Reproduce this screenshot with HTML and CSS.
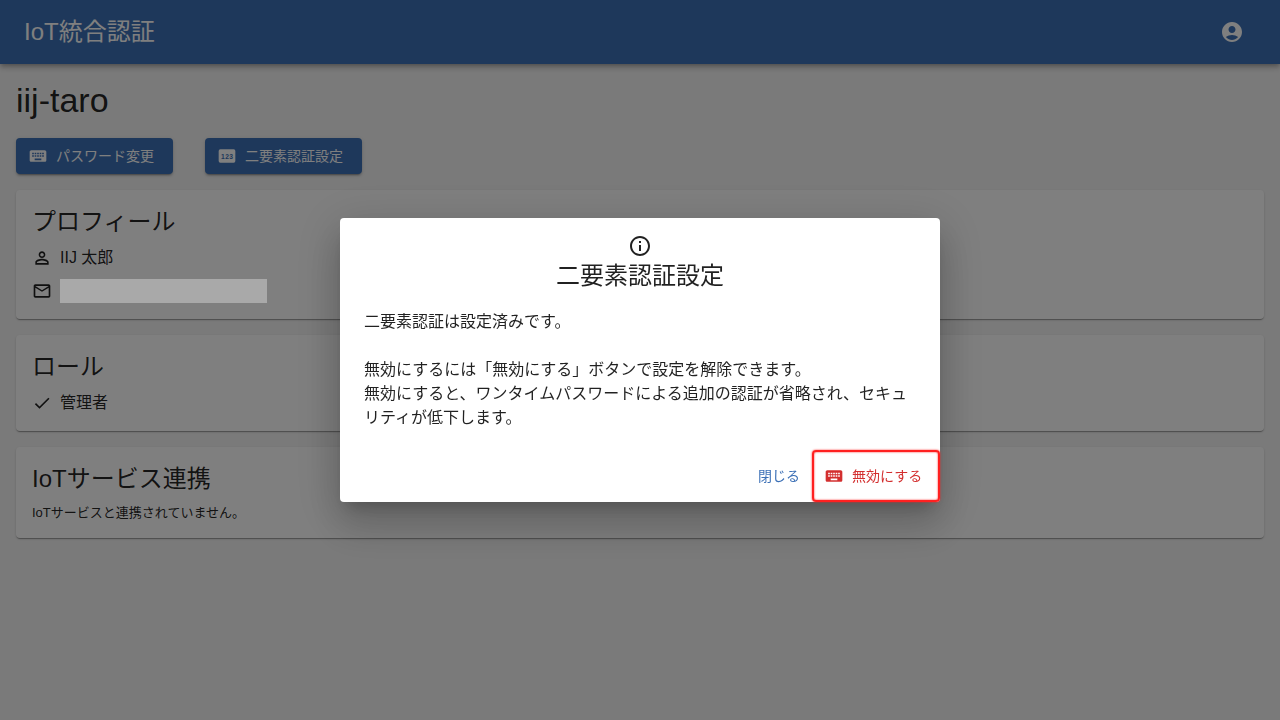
FILE: index.html
```html
<!DOCTYPE html>
<html lang="ja">
<head>
    <meta charset="UTF-8">
    <meta name="viewport" content="width=device-width, initial-scale=1.0">
    <title>IoT統合認証</title>
    <link rel="stylesheet" href="styles.css">
</head>
<body>

    <!-- Header -->
    <header class="app-bar">
        <div class="app-title">IoT統合認証</div>
        <button type="button" class="icon-button" aria-label="アカウント">
            <svg class="icon-large" viewBox="0 0 24 24" aria-hidden="true"><path d="M12 2C6.48 2 2 6.48 2 12s4.48 10 10 10 10-4.48 10-10S17.52 2 12 2zm0 4c1.93 0 3.5 1.57 3.5 3.5S13.93 13 12 13s-3.5-1.57-3.5-3.5S10.07 6 12 6zm0 14c-2.03 0-4.43-.82-6.14-2.88C7.55 15.8 9.68 15 12 15s4.45.8 6.14 2.12C16.43 19.18 14.03 20 12 20z"/></svg>
        </button>
    </header>

    <main class="content">
        <h1>iij-taro</h1>

        <div class="toolbar">
            <button type="button" class="button button-contained">
                <svg class="icon" viewBox="0 0 24 24" aria-hidden="true"><path d="M20 5H4c-1.1 0-1.99.9-1.99 2L2 17c0 1.1.9 2 2 2h16c1.1 0 2-.9 2-2V7c0-1.1-.9-2-2-2zm-9 3h2v2h-2V8zm0 3h2v2h-2v-2zM8 8h2v2H8V8zm0 3h2v2H8v-2zm-1 2H5v-2h2v2zm0-3H5V8h2v2zm9 7H8v-2h8v2zm0-4h-2v-2h2v2zm0-3h-2V8h2v2zm3 3h-2v-2h2v2zm0-3h-2V8h2v2z"/></svg>
                パスワード変更
            </button>
            <button type="button" class="button button-contained">
                <svg class="icon" viewBox="0 0 24 24" aria-hidden="true">
                    <rect x="2" y="4" width="20" height="16" rx="2"/>
                    <text class="pin-digits" x="7" y="15">1</text>
                    <text class="pin-digits" x="12" y="15">2</text>
                    <text class="pin-digits" x="17" y="15">3</text>
                </svg>
                二要素認証設定
            </button>
        </div>

        <!-- Profile -->
        <section class="card">
            <h2>プロフィール</h2>
            <ul class="card-list">
                <li>
                    <svg class="icon" viewBox="0 0 24 24" aria-hidden="true"><path d="M12 5.9c1.16 0 2.1.94 2.1 2.1s-.94 2.1-2.1 2.1S9.9 9.16 9.9 8s.94-2.1 2.1-2.1m0 9c2.97 0 6.1 1.46 6.1 2.1v1.1H5.9V17c0-.64 3.13-2.1 6.1-2.1M12 4C9.79 4 8 5.79 8 8s1.79 4 4 4 4-1.79 4-4-1.79-4-4-4zm0 9c-2.67 0-8 1.34-8 4v3h16v-3c0-2.66-5.33-4-8-4z"/></svg>
                    <span>IIJ 太郎</span>
                </li>
                <li>
                    <svg class="icon" viewBox="0 0 24 24" aria-hidden="true"><path d="M20 4H4c-1.1 0-1.99.9-1.99 2L2 18c0 1.1.9 2 2 2h16c1.1 0 2-.9 2-2V6c0-1.1-.9-2-2-2zm0 14H4V8l8 5 8-5v10zm-8-7L4 6h16l-8 5z"/></svg>
                    <span class="masked"></span>
                </li>
            </ul>
        </section>

        <!-- Roles -->
        <section class="card">
            <h2>ロール</h2>
            <ul class="card-list">
                <li>
                    <svg class="icon" viewBox="0 0 24 24" aria-hidden="true"><path d="M9 16.17 4.83 12l-1.42 1.41L9 19 21 7l-1.41-1.41z"/></svg>
                    <span>管理者</span>
                </li>
            </ul>
        </section>

        <!-- Linked services -->
        <section class="card">
            <h2>IoTサービス連携</h2>
            <p class="card-note">IoTサービスと連携されていません。</p>
        </section>
    </main>

    <!-- Two-factor dialog -->
    <div class="backdrop">
        <div class="dialog" role="dialog" aria-modal="true" aria-labelledby="dialog-title">
            <div class="dialog-header">
                <svg class="icon-large" viewBox="0 0 24 24" aria-hidden="true"><path d="M11 7h2v2h-2zm0 4h2v6h-2zm1-9C6.48 2 2 6.48 2 12s4.48 10 10 10 10-4.48 10-10S17.52 2 12 2zm0 18c-4.41 0-8-3.59-8-8s3.59-8 8-8 8 3.59 8 8-3.59 8-8 8z"/></svg>
                <h2 id="dialog-title">二要素認証設定</h2>
            </div>
            <div class="dialog-body">
                <p>二要素認証は設定済みです。</p>
                <p>無効にするには「無効にする」ボタンで設定を解除できます。<br>無効にすると、ワンタイムパスワードによる追加の認証が省略され、セキュリティが低下します。</p>
            </div>
            <div class="dialog-actions">
                <button type="button" class="button button-text">閉じる</button>
                <button type="button" class="button button-text button-danger">
                    <svg class="icon" viewBox="0 0 24 24" aria-hidden="true"><path d="M20 5H4c-1.1 0-1.99.9-1.99 2L2 17c0 1.1.9 2 2 2h16c1.1 0 2-.9 2-2V7c0-1.1-.9-2-2-2zm-9 3h2v2h-2V8zm0 3h2v2h-2v-2zM8 8h2v2H8V8zm0 3h2v2H8v-2zm-1 2H5v-2h2v2zm0-3H5V8h2v2zm9 7H8v-2h8v2zm0-4h-2v-2h2v2zm0-3h-2V8h2v2zm3 3h-2v-2h2v2zm0-3h-2V8h2v2z"/></svg>
                    無効にする
                </button>
            </div>
        </div>
    </div>

</body>
</html>
```
FILE: styles.css
```css
/* General Styling */
* {
    box-sizing: border-box;
}

body {
    font-family: 'Liberation Sans', 'Noto Sans CJK JP', sans-serif;
    font-size: 16px;
    line-height: 24px;
    margin: 0;
    background-color: #f5f5f5;
    color: rgba(0, 0, 0, 0.87);
}

h1, h2, p, ul {
    margin: 0;
    padding: 0;
    font-weight: 400;
}

.icon {
    width: 20px;
    height: 20px;
    flex-shrink: 0;
    fill: currentColor;
}

.icon-large {
    display: block;
    width: 24px;
    height: 24px;
    fill: currentColor;
}

/* Header Styling */
.app-bar {
    display: flex;
    align-items: center;
    justify-content: space-between;
    height: 64px;
    padding: 0 24px;
    background: #3c70b6;
    color: #ffffff;
    box-shadow: 0 2px 4px -1px rgba(0, 0, 0, 0.2), 0 4px 5px rgba(0, 0, 0, 0.14), 0 1px 10px rgba(0, 0, 0, 0.12);
}

.app-title {
    font-size: 24px;
    line-height: 32px;
}

.icon-button {
    padding: 12px;
    border: 0;
    border-radius: 50%;
    background: none;
    color: inherit;
    cursor: pointer;
}

/* Page Content */
.content {
    display: flex;
    flex-direction: column;
    gap: 16px;
    padding: 16px;
}

h1 {
    padding-bottom: 2px;
    font-size: 34px;
    line-height: 40px;
}

.toolbar {
    display: flex;
    gap: 32px;
}

.button {
    display: flex;
    align-items: center;
    gap: 8px;
    height: 36px;
    border: 0;
    border-radius: 4px;
    font-family: inherit;
    font-size: 14px;
    line-height: 24px;
    cursor: pointer;
}

.button-contained {
    min-width: 157px;
    padding: 6px 16px 6px 12px;
    background: #3c70b6;
    color: #ffffff;
    box-shadow: 0 3px 1px -2px rgba(0, 0, 0, 0.2), 0 2px 2px rgba(0, 0, 0, 0.14), 0 1px 5px rgba(0, 0, 0, 0.12);
}

.pin-digits {
    font-size: 8px;
    font-weight: 700;
    text-anchor: middle;
    fill: #3c70b6;
}

/* Cards */
.card {
    display: flex;
    flex-direction: column;
    gap: 8px;
    padding: 16px;
    background: #ffffff;
    border-radius: 4px;
    box-shadow: 0 2px 1px -1px rgba(0, 0, 0, 0.2), 0 1px 1px rgba(0, 0, 0, 0.14), 0 1px 3px rgba(0, 0, 0, 0.12);
}

h2 {
    font-size: 24px;
    line-height: 32px;
}

.card-list {
    display: flex;
    flex-direction: column;
    gap: 9px;
    list-style: none;
}

.card-list li {
    display: flex;
    align-items: center;
    gap: 8px;
}

/* The mail address stays hidden, also above the backdrop */
.masked {
    position: relative;
    z-index: 2;
    width: 207px;
    height: 24px;
    background: #a9a9a9;
}

.card-note {
    font-size: 13px;
    line-height: 19px;
}

/* Dialog */
.backdrop {
    position: fixed;
    inset: 0;
    z-index: 1;
    display: flex;
    align-items: center;
    justify-content: center;
    background: rgba(0, 0, 0, 0.5);
}

.dialog {
    width: 100%;
    max-width: 600px;
    background: #ffffff;
    border-radius: 4px;
    box-shadow: 0 11px 15px -7px rgba(0, 0, 0, 0.2), 0 24px 38px 3px rgba(0, 0, 0, 0.14), 0 9px 46px 8px rgba(0, 0, 0, 0.12);
}

.dialog-header {
    display: flex;
    flex-direction: column;
    align-items: center;
    padding: 16px 24px;
}

.dialog-header h2 {
    line-height: 36px;
}

.dialog-body {
    display: flex;
    flex-direction: column;
    gap: 24px;
    padding: 0 24px 20px;
}

.dialog-actions {
    display: flex;
    justify-content: flex-end;
    gap: 8px;
    padding: 8px;
}

.button-text {
    padding: 6px 8px;
    background: none;
    color: #3c70b6;
}

.button-danger {
    position: relative;
    min-width: 116px;
    color: #d32f2f;
}

/* Red frame around the disable button */
.button-danger::after {
    content: '';
    position: absolute;
    inset: -8px -8px -8px -4px;
    border: 2px solid #ff2020;
    border-radius: 4px;
    box-shadow: 0 0 2px #ff2020, inset 0 0 2px #ff2020;
}
```
